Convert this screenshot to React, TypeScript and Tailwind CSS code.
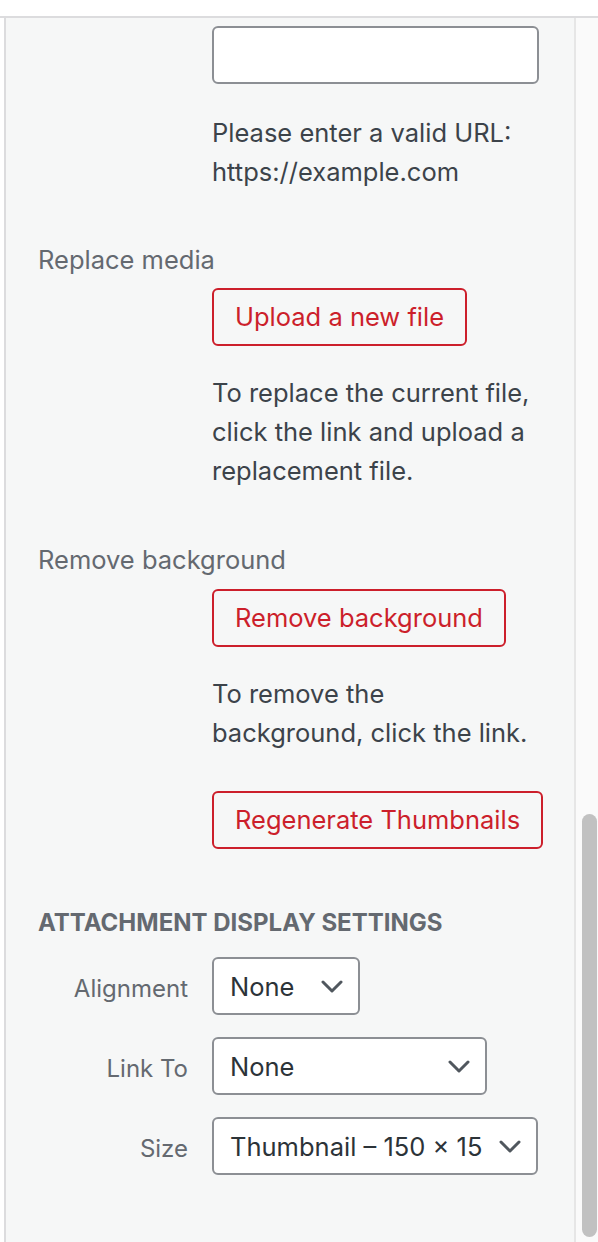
import React from 'react';

const font = { fontFamily: 'Inter, "Noto Sans", sans-serif' };

const Chevron = () => (
  <svg width="22" height="13" viewBox="0 0 22 13" fill="none" className="shrink-0">
    <path d="M2 2l9 9 9-9" stroke="#50575e" strokeWidth="3" strokeLinecap="round" strokeLinejoin="round" />
  </svg>
);

const RedButton = ({ label }: { label: string }) => (
  <button className="h-[58px] px-[21px] border-2 border-[#cc1f2b] rounded-[6px] text-[#cc1f2b] text-[25.5px] leading-none whitespace-nowrap bg-transparent self-start">
    {label}
  </button>
);

const SelectBox = ({ value, width }: { value: string; width: string }) => (
  <div className={`${width} h-[58px] border-2 border-[#8c8f94] rounded-[6px] bg-white flex items-center pl-[16px] pr-[15px] gap-[10px]`}>
    <span className="flex-1 min-w-0 whitespace-nowrap text-[25.5px] text-[#2c3338]">{value}</span>
    <Chevron />
  </div>
);

const SelectRow = ({ label, value, width }: { label: string; value: string; width: string }) => (
  <div className="flex items-center">
    <div className="w-[150px] text-right text-[24px] text-[#646970] pt-[5px] mr-[24px]">{label}</div>
    <SelectBox value={value} width={width} />
  </div>
);

export default function App() {
  return (
    <div className="w-[598px] h-[1242px] bg-white flex flex-col overflow-hidden" style={font}>
      <div className="h-[16px] bg-white shrink-0" />
      <div className="h-[2px] bg-[#dcdcde] shrink-0" />
      <div className="flex flex-1 min-h-0">
        <div className="w-[4px] bg-white" />
        <div className="w-[2px] bg-[#dcdcde]" />
        <div className="flex-1 bg-[#f6f7f7] pl-[32px] flex flex-col leading-[39px]">
          <div className="ml-[174px] flex flex-col">
            <div className="mt-[8px] w-[327px] h-[58px] border-2 border-[#8c8f94] rounded-[6px] bg-white" />
            <p className="mt-[29px] text-[25.5px] text-[#3c434a] whitespace-nowrap">
              Please enter a valid URL:<br />https://example.com
            </p>
          </div>

          <div className="mt-[49px] text-[25.5px] text-[#646970]">Replace media</div>
          <div className="ml-[174px] flex flex-col">
            <div className="mt-[9px] flex"><RedButton label="Upload a new file" /></div>
            <p className="mt-[27px] text-[25.5px] text-[#3c434a] whitespace-nowrap">
              To replace the current file,<br />click the link and upload a<br />replacement file.
            </p>
          </div>

          <div className="mt-[50px] text-[25.5px] text-[#646970]">Remove background</div>
          <div className="ml-[174px] flex flex-col">
            <div className="mt-[10px] flex"><RedButton label="Remove background" /></div>
            <p className="mt-[27px] text-[25.5px] text-[#3c434a] whitespace-nowrap">
              To remove the<br />background, click the link.
            </p>
            <div className="mt-[39px] flex"><RedButton label="Regenerate Thumbnails" /></div>
          </div>

          <h2 className="mt-[54px] text-[24px] font-bold uppercase text-[#646970]">Attachment Display Settings</h2>
          <div className="mt-[15px] flex flex-col gap-[22px]">
            <SelectRow label="Alignment" value="None" width="w-[148px]" />
            <SelectRow label="Link To" value="None" width="w-[275px]" />
            <SelectRow label="Size" value="Thumbnail – 150 × 15" width="w-[326px]" />
          </div>
        </div>
        <div className="w-[2px] bg-[#e6e6e6]" />
        <div className="w-[22px] bg-[#fafafa] flex flex-col pl-[6px]">
          <div className="mt-[796px] w-[15px] h-[423px] rounded-full bg-[#c1c1c1]" />
        </div>
      </div>
    </div>
  );
}
